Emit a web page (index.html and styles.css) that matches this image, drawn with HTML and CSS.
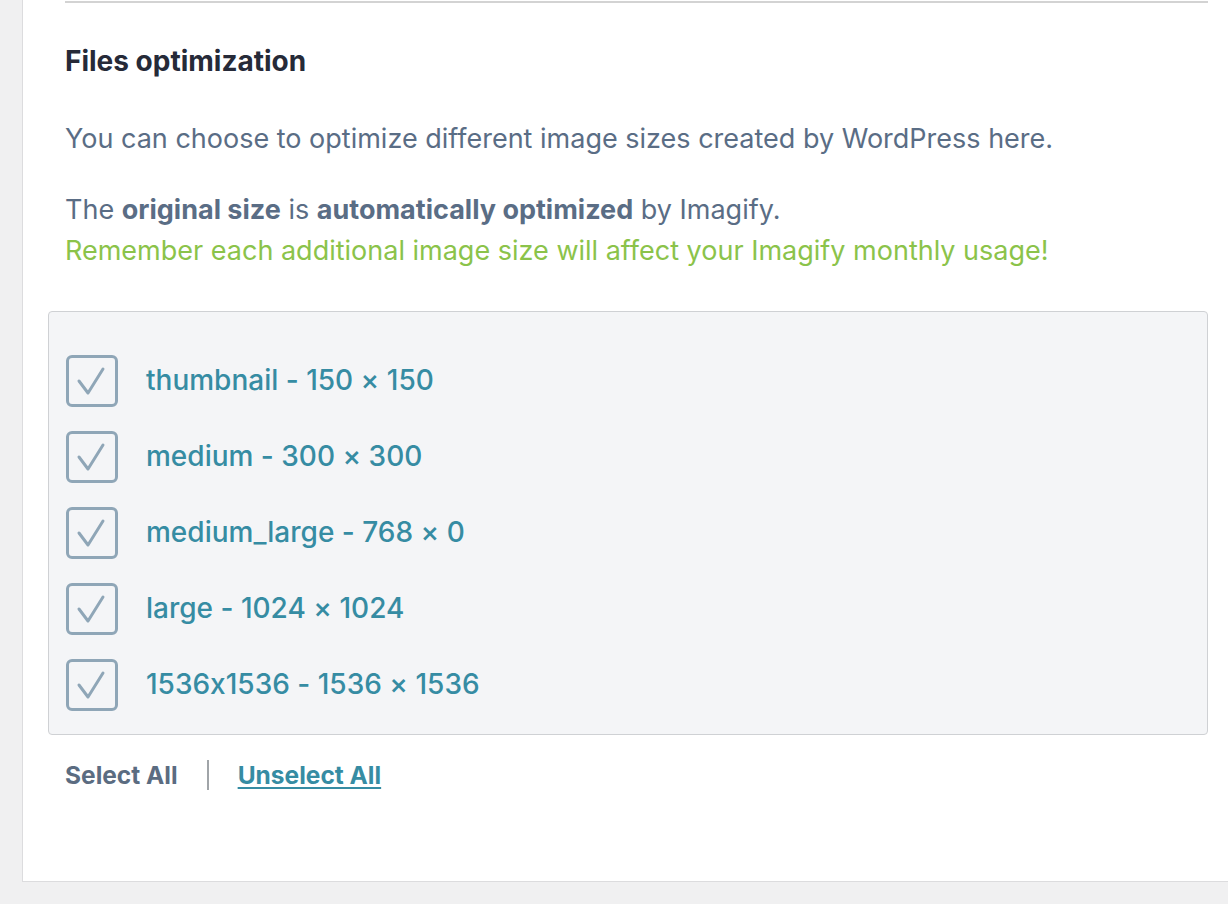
FILE: index.html
```html
<!DOCTYPE html>
<html lang="en">
<head>
  <meta charset="UTF-8" />
  <meta name="viewport" content="width=device-width, initial-scale=1.0"/>
  <title>Files optimization</title>
  <link rel="stylesheet" href="styles.css">
</head>
<body>
  <div class="card">
    <hr class="rule">
    <h2 class="title">Files optimization</h2>
    <p class="intro">You can choose to optimize different image sizes created by WordPress here.</p>
    <p class="intro">The <strong>original size</strong> is <strong>automatically optimized</strong> by Imagify.<br>
      <span class="warn">Remember each additional image size will affect your Imagify monthly usage!</span></p>

    <div class="sizes">
      <label class="size-row"><span class="check"><svg viewBox="0 0 52 52"><path d="M13 26 L22 38 L37 14" /></svg></span>thumbnail - 150 × 150</label>
      <label class="size-row"><span class="check"><svg viewBox="0 0 52 52"><path d="M13 26 L22 38 L37 14" /></svg></span>medium - 300 × 300</label>
      <label class="size-row"><span class="check"><svg viewBox="0 0 52 52"><path d="M13 26 L22 38 L37 14" /></svg></span>medium_large - 768 × 0</label>
      <label class="size-row"><span class="check"><svg viewBox="0 0 52 52"><path d="M13 26 L22 38 L37 14" /></svg></span>large - 1024 × 1024</label>
      <label class="size-row"><span class="check"><svg viewBox="0 0 52 52"><path d="M13 26 L22 38 L37 14" /></svg></span>1536x1536 - 1536 × 1536</label>
    </div>

    <div class="actions">
      <span class="select-all">Select All</span>
      <span class="sep"></span>
      <a class="unselect-all" href="#">Unselect All</a>
    </div>
  </div>
</body>
</html>
```

FILE: styles.css
```css
html, body {
  margin: 0;
  overflow: hidden;
}
body {
  background-color: #f0f0f1;
  font-family: Inter, "Open Sans", sans-serif;
  font-feature-settings: "calt" 0;
  height: 904px;
}
.card {
  margin-left: 22px;
  height: 880px;
  background: #fff;
  border-left: 1px solid #dcdcde;
  border-bottom: 1px solid #dcdcde;
  padding: 1px 20px 0 42px;
  box-sizing: content-box;
}
.rule {
  margin: 0;
  border: 0;
  height: 2px;
  background: #d3d3d3;
}
.title {
  margin: 42px 0 0;
  font-size: 28px;
  line-height: 32px;
  font-weight: 700;
  color: #262a38;
}
.intro {
  margin: 41px 0 0;
  font-size: 27px;
  line-height: 41px;
  color: #5a6d85;
}
.intro + .intro {
  margin-top: 30px;
}
.intro strong {
  font-weight: 700;
}
.warn {
  color: #8bc34a;
}
.sizes {
  margin: 40px 0 0 -17px;
  background: #f4f5f7;
  border: 1px solid #cfd1d4;
  border-radius: 4px;
  padding: 30px 17px 12px;
}
.size-row {
  display: flex;
  align-items: center;
  height: 76px;
  font-size: 28px;
  font-weight: 550;
  color: #368ca3;
}
.check {
  width: 52px;
  height: 52px;
  box-sizing: border-box;
  border: 3.5px solid #8fa6b7;
  border-radius: 6px;
  margin: 2px 28px 0 0;
  position: relative;
}
.check svg {
  position: absolute;
  left: -3.5px;
  top: -3.5px;
  width: 52px;
  height: 52px;
}
.check path {
  fill: none;
  stroke: #8fa6b7;
  stroke-width: 3;
  stroke-linecap: round;
  stroke-linejoin: round;
}
.actions {
  display: flex;
  align-items: center;
  margin-top: 25px;
  font-size: 24.5px;
  font-weight: 700;
}
.select-all {
  color: #5b6c81;
}
.sep {
  width: 2px;
  height: 30px;
  background: #a0a4a8;
  margin: 0 29px;
}
.unselect-all {
  color: #368ca3;
  text-decoration: underline;
  text-underline-offset: 3px;
}
```
